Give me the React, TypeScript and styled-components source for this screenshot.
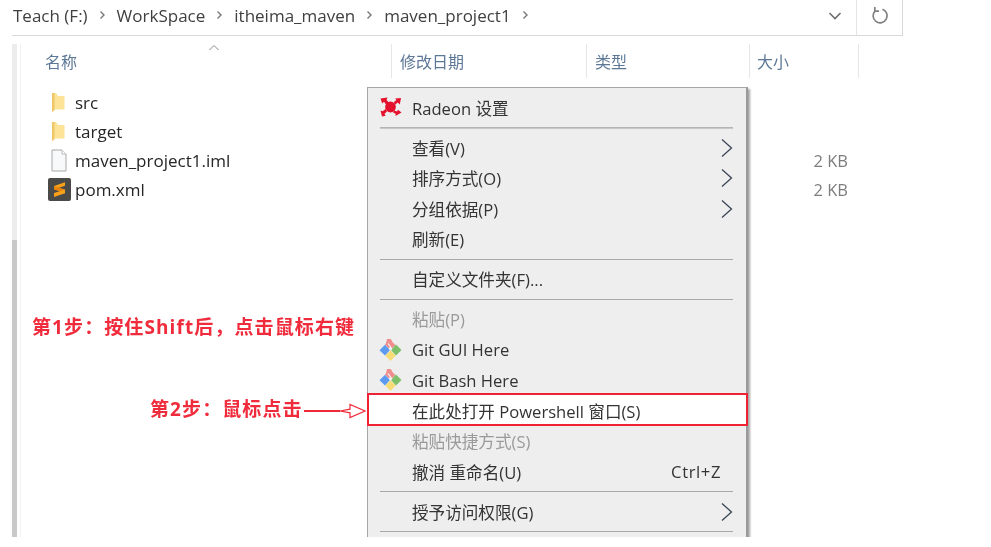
import React from 'react';
import styled, { createGlobalStyle } from 'styled-components';

const GlobalStyle = createGlobalStyle`
  html, body {
    margin: 0;
    padding: 0;
    background: #fff;
  }
  body {
    font-family: "Open Sans", "Noto Sans CJK SC", sans-serif;
  }
`;

const Screen = styled.div`
  position: relative;
  width: 991px;
  height: 537px;
  overflow: hidden;
  background: #fff;
  filter: blur(0.45px);
`;

const AddressBar = styled.div`
  display: flex;
  align-items: center;
  width: 891px;
  height: 36px;
  margin-left: 12px;
  box-sizing: border-box;
  border-bottom: 1px solid #d9d9d9;
  border-right: 1px solid #d9d9d9;
`;

const Crumbs = styled.div`
  flex: 1;
  display: flex;
  align-items: center;
  gap: 4px;
  padding: 0 0 5px 1px;
  font-size: 17px;
  color: #404040;
`;

const CrumbChevron = styled.svg`
  width: 21px;
  height: 12px;
  fill: none;
  stroke: #777;
  stroke-width: 1.4;
`;

const DropButton = styled.div`
  width: 44px;
  display: flex;
  justify-content: center;
  padding-left: 1px;
  padding-bottom: 3px;
  box-sizing: border-box;
`;

const RefreshButton = styled.div`
  width: 46px;
  height: 35px;
  display: flex;
  align-items: center;
  justify-content: center;
  box-sizing: border-box;
  border-left: 1px solid #e4e4e4;
  padding-bottom: 4px;
`;

const Body = styled.div`
  display: flex;
  height: 493px;
  margin: 8px 0 0 12px;
`;

const Rail = styled.div`
  width: 5px;
  background: linear-gradient(#ececec 0 196px, #c9c9c9 196px);
`;

const Listing = styled.div`
  margin-left: 3px;
  border-left: 1px solid #f2f2f2;
`;

const HeaderRow = styled.div`
  display: grid;
  grid-template-columns: 371px 195px 163px 109px;
  height: 34px;
`;

const HeaderCell = styled.div<{ $pad: number }>`
  position: relative;
  display: flex;
  align-items: center;
  box-sizing: border-box;
  padding-left: ${(p) => p.$pad}px;
  border-right: 1px solid #e6e6e6;
  font-size: 16px;
  color: #5d7897;
`;

const SortArrow = styled.svg`
  position: absolute;
  left: 187px;
  top: 0;
  width: 12px;
  height: 8px;
  fill: none;
  stroke: #8a8a8a;
  stroke-width: 1;
`;

const Files = styled.div`
  padding-top: 10px;
`;

const FileRow = styled.div`
  display: grid;
  grid-template-columns: 566px 163px 98px;
  align-items: center;
  height: 29px;
`;

const FileName = styled.div`
  display: flex;
  align-items: center;
  font-size: 17px;
  color: #262626;
`;

const IconSlot = styled.div<{ $inset: number }>`
  width: 28px;
  margin-left: 26px;
  display: flex;
  padding-left: ${(p) => p.$inset}px;
  box-sizing: border-box;
`;

const FileSize = styled.div`
  grid-column: 3;
  text-align: right;
  font-size: 16.5px;
  color: #7d7d7d;
`;

const Menu = styled.div`
  position: absolute;
  left: 367px;
  top: 87px;
  width: 381px;
  height: 470px;
  box-sizing: border-box;
  padding: 4.5px 13px 5px 12px;
  background: #eeeeee;
  border: 1px solid #a6a6a6;
  border-right: 2px solid #9a9a9a;
  box-shadow: 2px 2px 2px rgba(90, 90, 90, 0.55);
`;

const MenuRow = styled.div<{ $disabled?: boolean; $marked?: boolean }>`
  position: relative;
  display: flex;
  align-items: center;
  height: 30.5px;
  padding-left: 32px;
  font-size: 16.6px;
  color: ${(p) => (p.$disabled ? '#9a9a9a' : '#333333')};

  ${(p) =>
    p.$marked &&
    `
    &::before {
      content: '';
      position: absolute;
      left: -13px;
      right: -15px;
      top: -3px;
      bottom: 0;
      background: #fff;
      border: 2px solid #ee2233;
    }
  `}
`;

const RowLabel = styled.span`
  position: relative;
  flex: 1;
`;

const RowIcon = styled.div`
  position: absolute;
  left: -1px;
  top: 3px;
  width: 24px;
  height: 24px;
`;

const Shortcut = styled.span`
  padding-right: 12px;
  letter-spacing: 0.6px;
`;

const MenuChevron = styled.svg`
  width: 12px;
  height: 20px;
  fill: none;
  stroke: #3c4658;
  stroke-width: 1.3;
`;

const Separator = styled.div<{ $strong?: boolean }>`
  height: 1px;
  margin: 4px 0 4.5px;
  background: ${(p) => (p.$strong ? '#b4b4b4' : '#a8a8a8')};
  box-shadow: ${(p) => (p.$strong ? '0 1px 0 #c8c8c8' : 'none')};
`;

const Note = styled.div<{ $left: number; $top: number }>`
  position: absolute;
  left: ${(p) => p.$left}px;
  top: ${(p) => p.$top}px;
  font-size: 19px;
  line-height: 24px;
  font-weight: 700;
  letter-spacing: 1.1px;
  white-space: nowrap;
  color: #f02c3c;
`;

const PointerArrow = styled.svg`
  position: absolute;
  left: 303px;
  top: 402px;
  width: 64px;
  height: 18px;
  fill: none;
  stroke: #ee2a3a;
`;

function Chevron() {
  return (
    <CrumbChevron viewBox="0 0 21 12">
      <polyline points="8.5,2.5 12,6 8.5,9.5" />
    </CrumbChevron>
  );
}

function SubmenuArrow() {
  return (
    <MenuChevron viewBox="0 0 12 20">
      <polyline points="1,1.5 10.5,10 1,18.5" />
    </MenuChevron>
  );
}

function FolderIcon() {
  return (
    <svg width="16" height="21" viewBox="0 0 16 21">
      <path d="M2 1h4l2 3h6.5v13.5H4L2 20z" fill="#fce398" />
      <path d="M2 1h2.5v17.5L2 20z" fill="#efc768" />
    </svg>
  );
}

function PlainFileIcon() {
  return (
    <svg width="16" height="23" viewBox="0 0 16 23">
      <path d="M1 1h10l4 4v17H1z" fill="#f8f9fa" stroke="#a8a8a8" />
      <path d="M11 1v4h4" fill="#fff" stroke="#b8b8b8" />
    </svg>
  );
}

function SublimeIcon() {
  return (
    <svg width="23" height="23" viewBox="0 0 23 23">
      <rect width="23" height="23" rx="2" fill="#4a4a48" />
      <path d="M6 8 17 4.2v3.6L6 11.6z" fill="#f9a11b" />
      <path d="M6 8l11 3.6v3.6L6 11.6z" fill="#e8860c" />
      <path d="M6 15 17 11.4v3.8L6 19z" fill="#f9a11b" />
    </svg>
  );
}

function RadeonIcon() {
  return (
    <svg width="24" height="24" viewBox="0 0 24 24">
      <circle cx="11.5" cy="11" r="5.4" fill="#e3112c" />
      <path d="M1.5 2.5 8.5 1.5 7.5 4 10 6.5 7 8.5 5 5.8 3.2 7.5z" fill="#e3112c" />
      <path d="M22 2 20.8 8.5 18.8 6.5 16 8.8 14.8 6 17.5 4 16 2.5z" fill="#e3112c" />
      <path d="M3 20.5 1.5 14.5l2.2.8L6.5 13 8 15.6l-2.6 2.4 1.4 1.8z" fill="#e3112c" />
      <path d="M22.5 16.5 16.5 20l.2-2.2-2.7-1.2 1-2.4 3 1.3 1-1.8z" fill="#e3112c" />
    </svg>
  );
}

function GitIcon() {
  return (
    <svg width="24" height="24" viewBox="0 0 24 24">
      <path d="M11.5 12 6 6.5l1-1.2L8 1h3.8l2 3.4L16.4 7z" fill="#f08d8d" />
      <path d="M12 12l5-5.5 5.5 5.5-5.5 5.5z" fill="#7ec06a" />
      <path d="M11.5 12.5l5.2 5-5.2 5.5-5.2-5.5z" fill="#f6dc75" />
      <path d="M11 12 6 6.8.5 12.2 6 17.6z" fill="#5c9bf0" />
      <circle cx="11.5" cy="10.5" r="1.6" fill="#f4f4f4" />
      <path d="M9 5.5 12 9.5" stroke="#f4f4f4" strokeWidth="1.2" />
    </svg>
  );
}

const columns = [
  { label: '名称', pad: 24 },
  { label: '修改日期', pad: 8 },
  { label: '类型', pad: 8 },
  { label: '大小', pad: 7 },
];

function App() {
  return (
    <>
      <GlobalStyle />
      <Screen>
        <AddressBar>
          <Crumbs>
            <span>Teach (F:)</span>
            <Chevron />
            <span>WorkSpace</span>
            <Chevron />
            <span>itheima_maven</span>
            <Chevron />
            <span>maven_project1</span>
            <Chevron />
          </Crumbs>
          <DropButton>
            <svg width="14" height="10" viewBox="0 0 14 10" fill="none" stroke="#6e6e6e" strokeWidth="1.6">
              <polyline points="1.5,2 7,7.5 12.5,2" />
            </svg>
          </DropButton>
          <RefreshButton>
            <svg width="18" height="19" viewBox="0 0 18 19" fill="none" stroke="#808080" strokeWidth="1.7">
              <path d="M11.5 3.2A7 7 0 1 1 4.2 4.8" />
              <polyline points="3.8,1 3.8,5.2 8,5.2" />
            </svg>
          </RefreshButton>
        </AddressBar>
        <Body>
          <Rail />
          <Listing>
            <HeaderRow>
              {columns.map((col, i) => (
                <HeaderCell key={col.label} $pad={col.pad}>
                  {i === 0 && (
                    <SortArrow viewBox="0 0 12 8">
                      <polyline points="1.5,6 6,1.5 10.5,6" />
                    </SortArrow>
                  )}
                  {col.label}
                </HeaderCell>
              ))}
            </HeaderRow>
            <Files>
              <FileRow>
                <FileName>
                  <IconSlot $inset={3}><FolderIcon /></IconSlot>
                  src
                </FileName>
              </FileRow>
              <FileRow>
                <FileName>
                  <IconSlot $inset={3}><FolderIcon /></IconSlot>
                  target
                </FileName>
              </FileRow>
              <FileRow>
                <FileName>
                  <IconSlot $inset={4}><PlainFileIcon /></IconSlot>
                  maven_project1.iml
                </FileName>
                <FileSize>2 KB</FileSize>
              </FileRow>
              <FileRow>
                <FileName>
                  <IconSlot $inset={1}><SublimeIcon /></IconSlot>
                  pom.xml
                </FileName>
                <FileSize>2 KB</FileSize>
              </FileRow>
            </Files>
          </Listing>
        </Body>

        <Menu>
          <MenuRow>
            <RowIcon><RadeonIcon /></RowIcon>
            <RowLabel>Radeon 设置</RowLabel>
          </MenuRow>
          <Separator $strong />
          <MenuRow>
            <RowLabel>查看(V)</RowLabel>
            <SubmenuArrow />
          </MenuRow>
          <MenuRow>
            <RowLabel>排序方式(O)</RowLabel>
            <SubmenuArrow />
          </MenuRow>
          <MenuRow>
            <RowLabel>分组依据(P)</RowLabel>
            <SubmenuArrow />
          </MenuRow>
          <MenuRow>
            <RowLabel>刷新(E)</RowLabel>
          </MenuRow>
          <Separator />
          <MenuRow>
            <RowLabel>自定义文件夹(F)...</RowLabel>
          </MenuRow>
          <Separator />
          <MenuRow $disabled>
            <RowLabel>粘贴(P)</RowLabel>
          </MenuRow>
          <MenuRow>
            <RowIcon><GitIcon /></RowIcon>
            <RowLabel>Git GUI Here</RowLabel>
          </MenuRow>
          <MenuRow>
            <RowIcon><GitIcon /></RowIcon>
            <RowLabel>Git Bash Here</RowLabel>
          </MenuRow>
          <MenuRow $marked>
            <RowLabel>在此处打开 Powershell 窗口(S)</RowLabel>
          </MenuRow>
          <MenuRow $disabled>
            <RowLabel>粘贴快捷方式(S)</RowLabel>
          </MenuRow>
          <MenuRow>
            <RowLabel>撤消 重命名(U)</RowLabel>
            <Shortcut>Ctrl+Z</Shortcut>
          </MenuRow>
          <Separator />
          <MenuRow>
            <RowLabel>授予访问权限(G)</RowLabel>
            <SubmenuArrow />
          </MenuRow>
          <Separator />
        </Menu>

        <Note $left={32} $top={315}>第1步：按住Shift后，点击鼠标右键</Note>
        <Note $left={150} $top={397}>第2步：鼠标点击</Note>
        <PointerArrow viewBox="0 0 64 18">
          <line x1="1" y1="9" x2="37" y2="9" strokeWidth="1.8" />
          <path d="M37 9 47 7.2V2.5L62 9 47 15.5v-4.7z" strokeWidth="1.2" />
        </PointerArrow>
      </Screen>
    </>
  );
}

export default App;
